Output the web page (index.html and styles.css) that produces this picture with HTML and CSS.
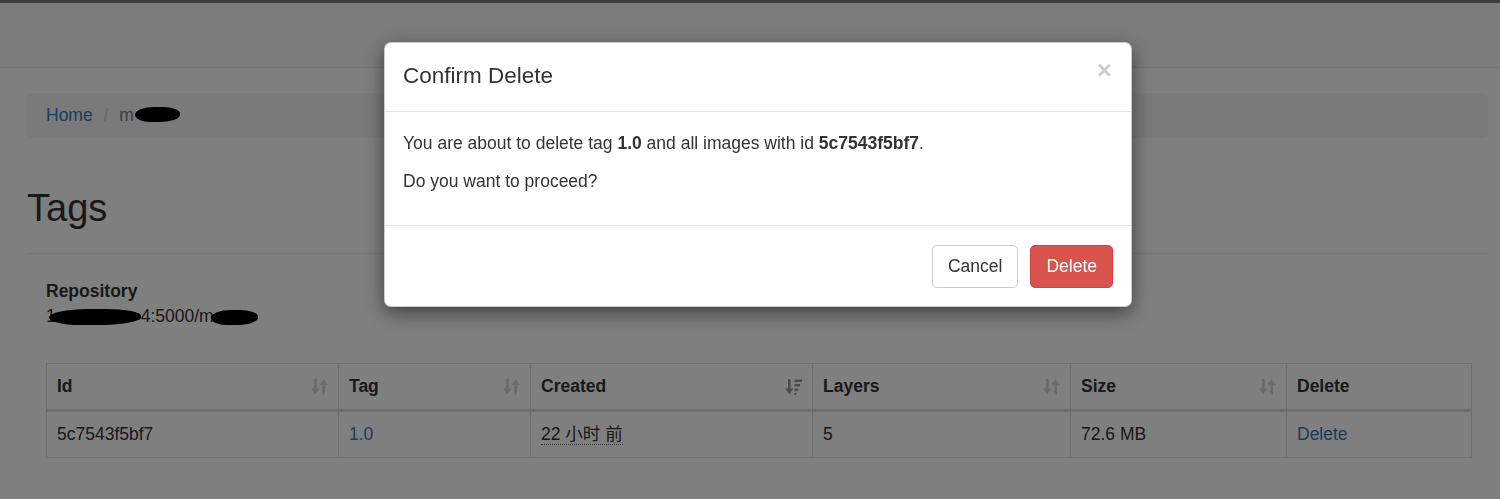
FILE: index.html
```html
<!DOCTYPE html>
<html lang="zh">
<head>
<meta charset="utf-8">
<title>Tags</title>
<link rel="stylesheet" href="styles.css">
</head>
<body>
<div class="topline"></div>
<nav class="navbar"></nav>
<main class="container">
  <ol class="breadcrumb">
    <li><a href="#">Home</a></li>
    <li class="active">m<span class="redact redact-crumb"></span></li>
  </ol>
  <div class="page-header"><h1>Tags</h1></div>
  <section class="content">
    <dl class="repo">
      <dt>Repository</dt>
      <dd>1<span class="redact redact-host"></span>4:5000/m<span class="redact redact-name"></span></dd>
    </dl>
    <table class="tags">
      <colgroup>
        <col class="c-id"><col class="c-tag"><col class="c-created"><col class="c-layers"><col class="c-size"><col class="c-delete">
      </colgroup>
      <thead>
        <tr>
          <th><div class="th-inner"><span>Id</span><svg class="sort" viewBox="0 0 17 17"><path d="M3 1h2.6v9.5H8.4L4.3 16.5 0.2 10.5H3z M11.4 16.5h2.6V7h2.8L12.7 1 8.6 7h2.8z"/></svg></div></th>
          <th><div class="th-inner"><span>Tag</span><svg class="sort" viewBox="0 0 17 17"><path d="M3 1h2.6v9.5H8.4L4.3 16.5 0.2 10.5H3z M11.4 16.5h2.6V7h2.8L12.7 1 8.6 7h2.8z"/></svg></div></th>
          <th><div class="th-inner"><span>Created</span><svg class="sort active" viewBox="0 0 17 17"><path d="M3 1h2.6v9.5H8.4L4.3 16.5 0.2 10.5H3z M9.5 1.5h7.5v2.6H9.5z M9.5 6h5.6v2.6H9.5z M9.5 10.5h3.8v2.6H9.5z M9.5 15h1.9v2H9.5z"/></svg></div></th>
          <th><div class="th-inner"><span>Layers</span><svg class="sort" viewBox="0 0 17 17"><path d="M3 1h2.6v9.5H8.4L4.3 16.5 0.2 10.5H3z M11.4 16.5h2.6V7h2.8L12.7 1 8.6 7h2.8z"/></svg></div></th>
          <th><div class="th-inner"><span>Size</span><svg class="sort" viewBox="0 0 17 17"><path d="M3 1h2.6v9.5H8.4L4.3 16.5 0.2 10.5H3z M11.4 16.5h2.6V7h2.8L12.7 1 8.6 7h2.8z"/></svg></div></th>
          <th><div class="th-inner"><span>Delete</span></div></th>
        </tr>
      </thead>
      <tbody>
        <tr>
          <td>5c7543f5bf7</td>
          <td><a href="#">1.0</a></td>
          <td><abbr class="timeago" title="2018-01-01">22 小时 前</abbr></td>
          <td>5</td>
          <td>72.6 MB</td>
          <td><a href="#">Delete</a></td>
        </tr>
      </tbody>
    </table>
  </section>
</main>

<div class="backdrop"></div>

<div class="modal" role="dialog">
  <div class="modal-header">
    <h4 class="modal-title">Confirm Delete</h4>
    <button class="close" type="button">×</button>
  </div>
  <div class="modal-body">
    <p>You are about to delete tag <strong>1.0</strong> and all images with id <strong>5c7543f5bf7</strong>.</p>
    <p>Do you want to proceed?</p>
  </div>
  <div class="modal-footer">
    <button class="btn btn-default" type="button">Cancel</button>
    <button class="btn btn-danger" type="button">Delete</button>
  </div>
</div>
</body>
</html>
```

FILE: styles.css
```css
* { box-sizing: border-box; }
html, body { margin: 0; padding: 0; }
body {
  font-family: "Liberation Sans", Arial, "Noto Sans CJK SC", sans-serif;
  font-size: 17.5px;
  line-height: 25px;
  color: #333;
  background: #fff;
  height: 499px;
  overflow: hidden;
}
a { color: #337ab7; text-decoration: none; }

.topline { height: 3px; background: #7a7a7a; }
.navbar { height: 65px; background: #f8f8f8; border-bottom: 1px solid #e7e7e7; }

.container { padding: 25px 12px 0 27px; }

.breadcrumb {
  list-style: none;
  margin: 0;
  padding: 10px 19px;
  background: #f5f5f5;
  border-radius: 5px;
}
.breadcrumb li { display: inline-block; }
.breadcrumb li + li::before { content: "/\00a0"; padding: 0 6px; color: #ccc; }
.breadcrumb .active { color: #777; }

.redact {
  display: inline-block;
  background: #000;
  vertical-align: middle;
  border-radius: 45% 40% 50% 35% / 55% 45% 50% 50%;
}
.redact-crumb { width: 45px; height: 15px; margin-left: 1px; margin-top: -3px; }
.redact-host { width: 92px; height: 16px; margin-left: -7px; }
.redact-name { width: 47px; height: 15px; margin-left: -3px; }

.page-header {
  margin: 49px 0 25px;
  padding-bottom: 11px;
  border-bottom: 1px solid #eee;
}
.page-header h1 {
  margin: 0 0 13px;
  font-size: 38px;
  line-height: 42px;
  font-weight: normal;
}

.content { padding: 0 17px 0 19px; }

.repo { margin: 0 0 34px; }
.repo dt { font-weight: bold; }
.repo dd { margin: 0; }

.tags {
  width: 100%;
  table-layout: fixed;
  border-collapse: collapse;
  border: 1px solid #ddd;
}
.c-id { width: 292px; }
.c-tag { width: 192px; }
.c-created { width: 282px; }
.c-layers { width: 258px; }
.c-size { width: 216px; }
.c-delete { width: 185px; }

.tags th, .tags td {
  border: 1px solid #ddd;
  padding: 10px;
  text-align: left;
  vertical-align: top;
}
.tags thead th {
  border-bottom: 3px solid #ddd;
  vertical-align: bottom;
  font-weight: bold;
}
.th-inner { display: flex; justify-content: space-between; align-items: center; }
.sort { width: 17px; height: 17px; fill: #d6d6d6; flex: none; }
.sort.active { fill: #999; }

abbr.timeago {
  text-decoration: none;
  border-bottom: 1px dotted #777;
  cursor: help;
}

.backdrop {
  position: fixed;
  inset: 0;
  background: rgba(0, 0, 0, 0.5);
}

.modal {
  position: fixed;
  top: 42px;
  left: 384px;
  width: 748px;
  background: #fff;
  border: 1px solid rgba(0, 0, 0, 0.2);
  border-radius: 7px;
  box-shadow: 0 6px 19px rgba(0, 0, 0, 0.5);
}
.modal-header {
  display: flex;
  justify-content: space-between;
  align-items: flex-start;
  padding: 17px 19px 19px 18px;
  border-bottom: 1px solid #e5e5e5;
}
.modal-title {
  margin: 0;
  font-size: 22.5px;
  line-height: 32px;
  font-weight: normal;
}
.close {
  margin-top: -3px;
  padding: 0;
  border: 0;
  background: none;
  font-family: "Liberation Sans", Arial, sans-serif;
  font-size: 26px;
  font-weight: bold;
  line-height: 1;
  color: #000;
  opacity: 0.2;
}
.modal-body { padding: 19px 19px 19px 18px; }
.modal-body p { margin: 0 0 12.5px; }
.modal-footer {
  display: flex;
  justify-content: flex-end;
  gap: 12px;
  padding: 19px 18px 18px;
  border-top: 1px solid #e5e5e5;
}
.btn {
  font-family: inherit;
  font-size: 17.5px;
  line-height: 25px;
  padding: 8px 15px;
  border: 1px solid transparent;
  border-radius: 5px;
}
.btn-default { background: #fff; border-color: #ccc; color: #333; }
.btn-danger { background: #d9534f; border-color: #d43f3a; color: #fff; }
```
